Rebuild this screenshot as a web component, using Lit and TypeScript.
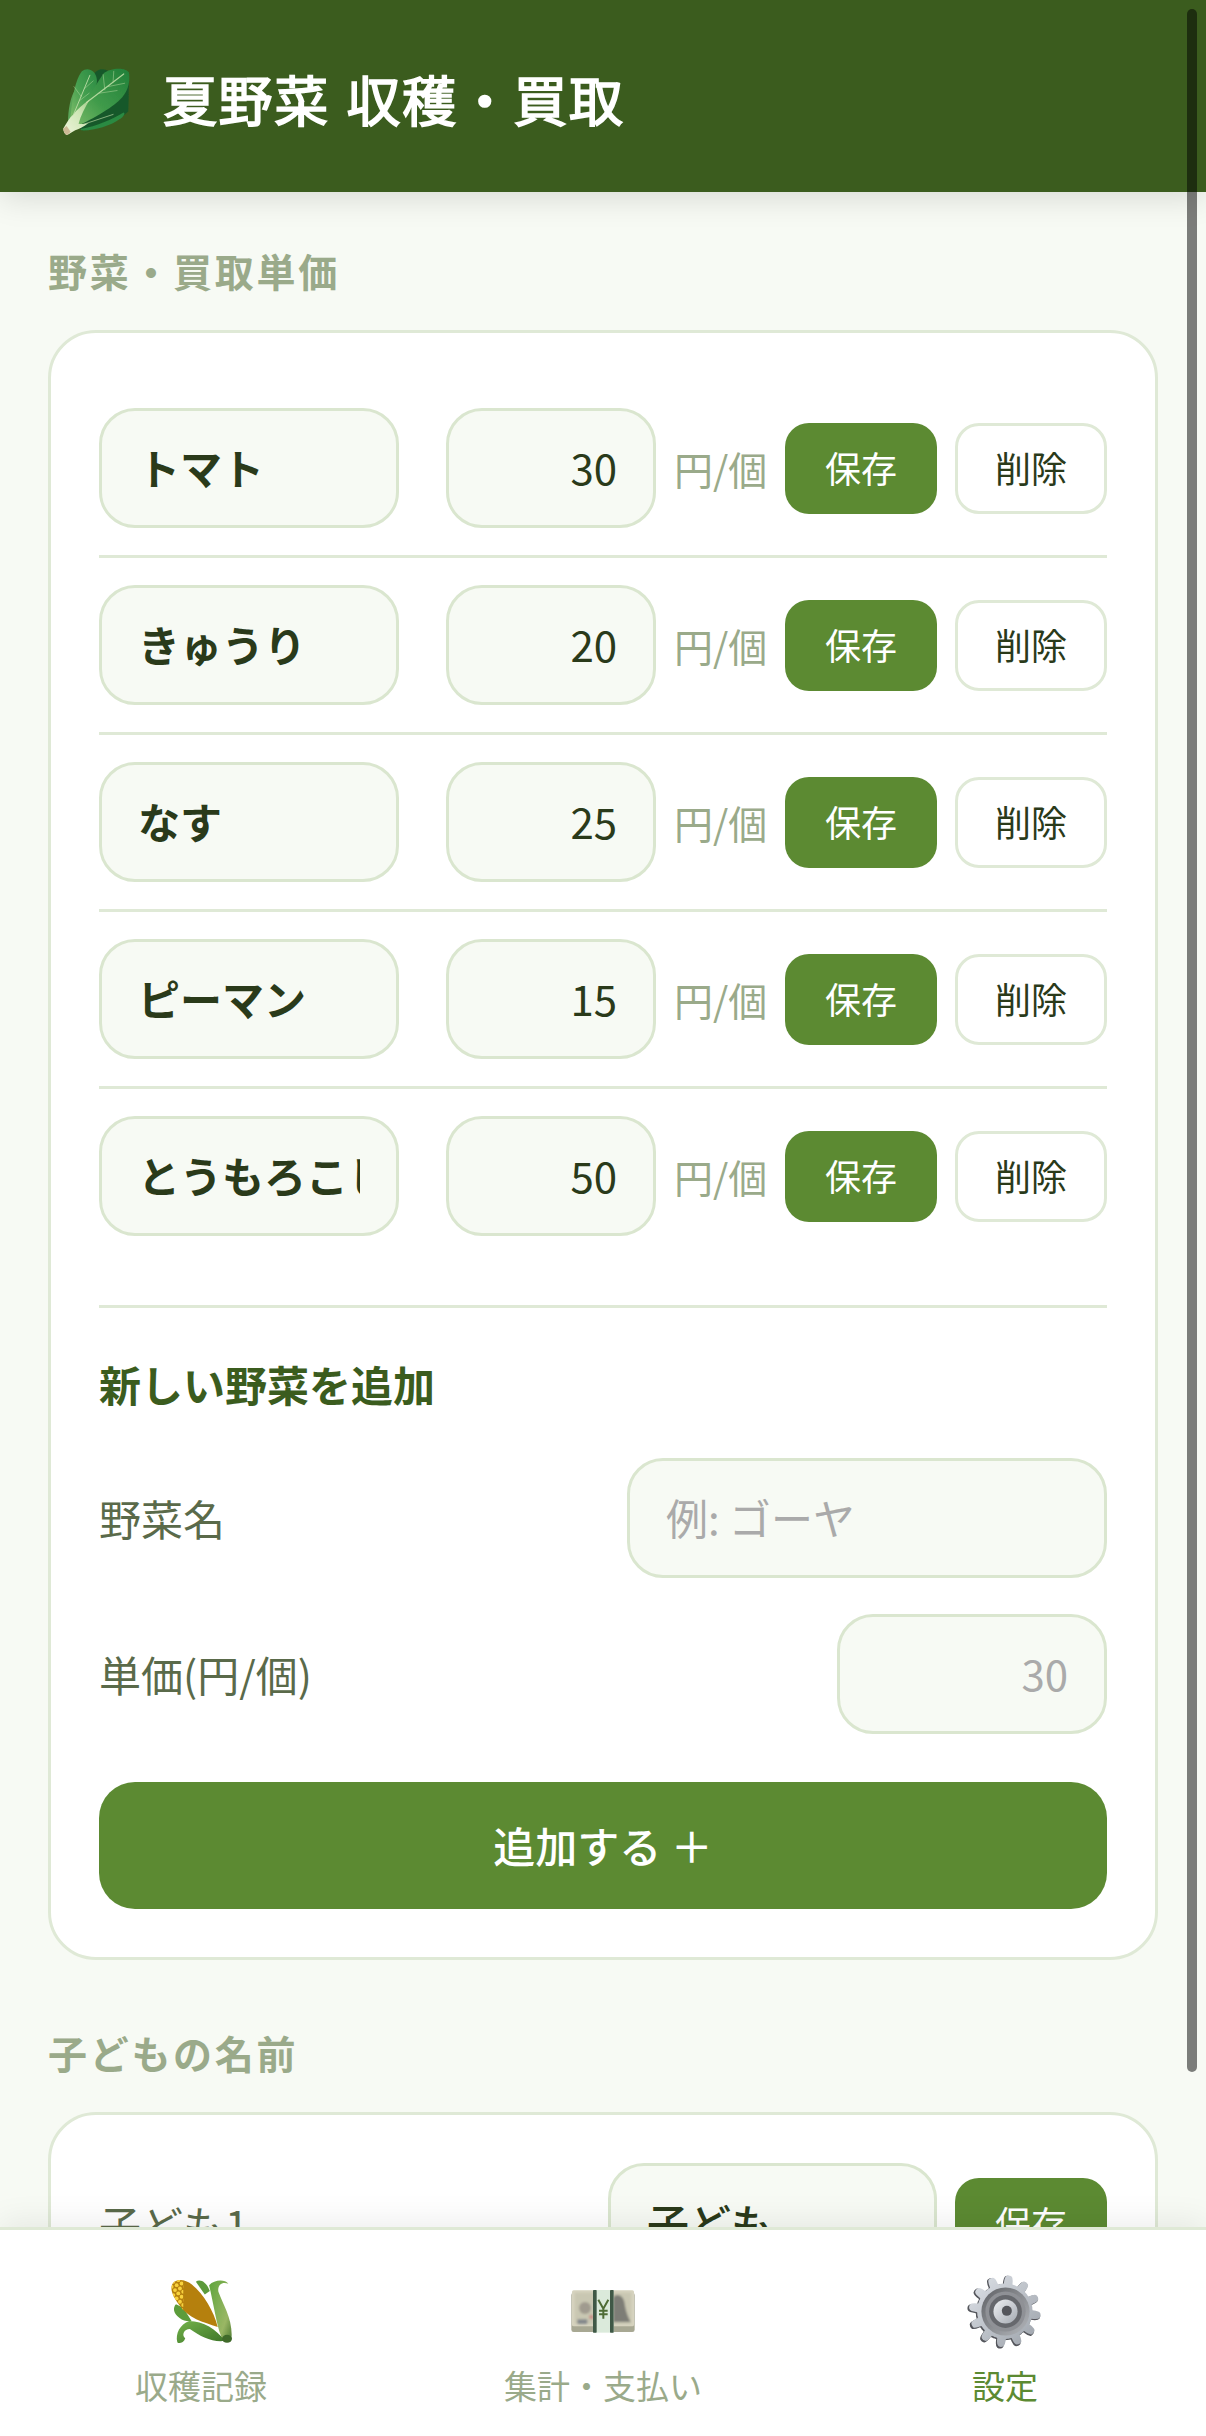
import { LitElement, html, css } from "lit";
import { customElement } from "lit/decorators.js";

const VEG: [string, string][] = [
  ["トマト", "30"],
  ["きゅうり", "20"],
  ["なす", "25"],
  ["ピーマン", "15"],
  ["とうもろこし", "50"],
];

function gearPath(cx: number, cy: number, rO: number, rI: number, n: number): string {
  const pts: string[] = [];
  for (let i = 0; i < n; i++) {
    const a = (i / n) * Math.PI * 2 + 0.12;
    const w = (Math.PI * 2) / n;
    const p = (r: number, t: number) =>
      `${(cx + r * Math.cos(t)).toFixed(1)} ${(cy + r * Math.sin(t)).toFixed(1)}`;
    pts.push(
      `${i === 0 ? "M" : "L"}${p(rI, a - w * 0.3)}`,
      `Q${p(rO * 0.98, a - w * 0.24)} ${p(rO, a - w * 0.12)}`,
      `Q${p(rO + 3, a)} ${p(rO, a + w * 0.12)}`,
      `Q${p(rO * 0.98, a + w * 0.24)} ${p(rI, a + w * 0.3)}`,
      `Q${p(rI - 1, a + w * 0.4)} ${p(rI, a + w * 0.5)}`,
      `Q${p(rI - 1, a + w * 0.6)} ${p(rI, a + w * 0.7)}`
    );
  }
  return pts.join(" ") + "Z";
}

const leafIcon = html`<svg class="leaf" viewBox="60 50 220 220" aria-hidden="true">
  <defs>
    <filter id="sl"><feGaussianBlur stdDeviation="1.5" /></filter>
    <linearGradient id="lf1" x1="0" y1="1" x2="1" y2="0">
      <stop offset="0" stop-color="#86c06c" /><stop offset=".5" stop-color="#46a050" /><stop offset="1" stop-color="#2a8a42" />
    </linearGradient>
    <linearGradient id="lf2" x1="0" y1="1" x2="1" y2="0">
      <stop offset="0" stop-color="#7dbc68" /><stop offset=".45" stop-color="#3f9a4a" /><stop offset="1" stop-color="#218039" />
    </linearGradient>
    <linearGradient id="lf3" x1="0" y1="1" x2="1" y2="0">
      <stop offset="0" stop-color="#f0f5dc" /><stop offset=".6" stop-color="#cfe6b6" /><stop offset="1" stop-color="#9dcb86" />
    </linearGradient>
  </defs>
  <g filter="url(#sl)">
    <path d="M84 225C84 180 92 140 108 118C100 160 100 195 104 225Z" fill="#5aa558" />
    <path d="M110 226L160 78C170 58 190 56 204 64L268 96L266 186C240 215 170 242 126 244Z" fill="#17592a" />
    <path d="M90 222C96 170 100 100 126 66C142 52 168 62 171 90C174 120 150 155 112 222Z" fill="url(#lf1)" />
    <path d="M98 232C130 180 160 115 192 72C210 56 258 52 268 70C272 105 262 130 240 152C220 175 150 215 98 238Z" fill="url(#lf2)" />
    <path d="M122 240C170 232 222 208 252 190C258 192 250 205 240 210C210 232 160 246 124 244Z" fill="#2a8a42" />
    <path d="M70 238C80 222 88 206 100 196C112 180 130 165 150 150C135 175 122 200 116 224C126 226 135 225 146 222C130 234 116 240 106 244C96 250 84 258 80 258C74 255 70 246 70 238Z" fill="url(#lf3)" />
    <path d="M70 238L80 231L92 248L82 258C74 256 70 246 70 238Z" fill="#cdb995" />
    <g fill="none" stroke="#c6e2ac" stroke-linecap="round" opacity=".85">
      <path d="M100 198L150 78" stroke-width="3" /><path d="M124 142L102 112M134 118L160 95M118 155L148 132" stroke-width="1.5" />
      <path d="M140 160L252 74" stroke-width="3.5" /><path d="M195 122L190 76M220 98L222 66M178 132L232 124M205 112L255 102" stroke-width="1.6" />
      <path d="M130 226L220 196" stroke-width="2.2" />
    </g>
  </g>
</svg>`;

const kernels: { x: number; y: number; c: string }[] = [];
for (let i = 0; i < 16; i++) {
  for (let j = -6; j < 7; j++) {
    const odd = Math.abs(j) % 2 === 1;
    const x = 160 + i * 10 + j * 10 + (odd ? 5 : 0);
    const y = 62 + i * 10 - j * 10 + (odd ? 5 : 0);
    const t = i / 15;
    kernels.push({ x, y, c: t < 0.5 ? "#f8d23e" : t < 0.8 ? "#efbd2a" : "#dca21a" });
  }
}

const cornIcon = html`<svg class="corn" viewBox="150 45 190 210" aria-hidden="true">
  <defs>
    <filter id="sc"><feGaussianBlur stdDeviation="1.2" /></filter>
    <linearGradient id="hk" x1="0" y1="0" x2="1" y2="1">
      <stop offset="0" stop-color="#5fa53c" /><stop offset=".7" stop-color="#9ab765" /><stop offset="1" stop-color="#4d7a30" />
    </linearGradient>
    <linearGradient id="hb" x1="0" y1="0" x2="1" y2="1">
      <stop offset="0" stop-color="#74b34a" /><stop offset="1" stop-color="#3c7429" />
    </linearGradient>
    <clipPath id="cc"><path d="M155 75C160 52 192 50 216 70C252 100 282 150 294 198C250 184 204 172 178 132C162 110 152 92 155 75Z" /></clipPath>
  </defs>
  <g filter="url(#sc)">
    <path d="M228 62C240 52 260 62 270 90L255 100Z" fill="#5c9a3a" />
    <path d="M168 130C158 140 160 158 178 170C190 180 205 182 215 180L190 140Z" fill="#5b9c3a" />
    <path d="M155 75C160 52 192 50 216 70C252 100 282 150 294 198C250 184 204 172 178 132C162 110 152 92 155 75Z" fill="#b5800f" />
    <g clip-path="url(#cc)">
      ${kernels.map((k) => html`<svg><circle cx=${k.x} cy=${k.y} r="5.8" fill=${k.c} /></svg>`)}
    </g>
    <path d="M268 72C284 55 316 54 326 68C308 60 292 72 296 92C310 130 336 170 336 222C336 244 318 250 304 226C290 190 282 130 268 72Z" fill="url(#hk)" />
    <path d="M172 244C166 218 180 190 208 180C250 180 290 205 316 240C280 246 240 226 210 204C192 204 184 222 196 232C192 246 176 250 172 244Z" fill="url(#hb)" />
    <ellipse cx="322" cy="234" rx="15" ry="12" fill="#3f6a2c" />
  </g>
</svg>`;

const moneyIcon = html`<svg class="money" viewBox="118 78 198 138" aria-hidden="true">
  <defs><filter id="sm"><feGaussianBlur stdDeviation="2.4" /></filter></defs>
  <rect x="122" y="92" width="190" height="118" rx="7" fill="#a8a893" />
  <rect x="124" y="85" width="186" height="108" rx="5" fill="#d6d3bf" />
  <g filter="url(#sm)">
    <rect x="132" y="92" width="170" height="94" fill="#c9c7b2" />
    <circle cx="163" cy="138" r="18" fill="#a09b8f" />
    <circle cx="182" cy="165" r="7" fill="#c98f88" />
    <rect x="140" y="172" width="30" height="14" rx="3" fill="#85898c" />
    <path d="M248 180V105C258 92 280 100 282 125C286 150 292 165 300 180Z" fill="#7d7d76" />
  </g>
  <rect x="187" y="84" width="62" height="128" fill="#dbeadb" />
  <rect x="187" y="84" width="11" height="128" rx="2" fill="#3f5846" />
  <rect x="238" y="84" width="11" height="128" rx="2" fill="#3f5846" />
  <g fill="none" stroke="#4f6c35" stroke-width="6">
    <path d="M203 113L218 140L233 113M218 140V170M205 146H231M205 157H231" />
  </g>
</svg>`;

const gearIcon = html`<svg class="gear" viewBox="80 35 230 230" aria-hidden="true">
  <defs>
    <filter id="sg"><feGaussianBlur stdDeviation="1.2" /></filter>
    <linearGradient id="gg" x1="0" y1="0" x2="1" y2="1">
      <stop offset="0" stop-color="#dfe3e9" /><stop offset="1" stop-color="#9aa0a8" />
    </linearGradient>
    <linearGradient id="gr" x1="0" y1="0" x2="1" y2="1">
      <stop offset="0" stop-color="#5f6165" /><stop offset="1" stop-color="#b4b7bc" />
    </linearGradient>
    <linearGradient id="gh" x1="0" y1="0" x2="1" y2="1">
      <stop offset="0" stop-color="#eef0f3" /><stop offset="1" stop-color="#a5aab2" />
    </linearGradient>
  </defs>
  <g filter="url(#sg)">
    <path d=${gearPath(190, 152, 108, 84, 12)} fill="#54565c" />
    <path d=${gearPath(193, 149, 106, 83, 12)} fill="url(#gg)" />
    <circle cx="195" cy="150" r="72" fill="url(#gr)" />
    <circle cx="195" cy="150" r="60" fill="#8f9196" />
    <circle cx="195" cy="150" r="49" fill="#66686d" />
    <circle cx="195" cy="150" r="36" fill="url(#gh)" />
    <circle cx="199" cy="148" r="15" fill="#55575c" />
  </g>
</svg>`;

@customElement("app-root")
export class AppRoot extends LitElement {
  static styles = css`
    :host {
      display: block;
      width: 1206px;
      height: 2436px;
      font-family: "Noto Sans CJK JP", "Noto Sans", sans-serif;
      color: #2a3a1a;
    }
    * { box-sizing: border-box; }
    .app {
      position: relative;
      display: flex;
      flex-direction: column;
      height: 2436px;
      overflow: hidden;
      background: #f7faf4;
    }
    header {
      position: relative;
      z-index: 2;
      flex: none;
      height: 192px;
      padding: 12px 60px 0;
      display: flex;
      align-items: center;
      gap: 30px;
      background: #3b5c1e;
      box-shadow: 0 6px 30px rgba(0, 0, 0, 0.13);
    }
    .leaf { width: 73px; height: 73px; flex: none; display: block; }
    h1 {
      margin: 0;
      font-size: 54px;
      line-height: 1.2;
      font-weight: 400;
      color: #fff;
      letter-spacing: 1.6px;
      word-spacing: 3px;
      -webkit-text-stroke: 1.7px #fff;
      white-space: pre;
      position: relative;
      top: -3px;
    }
    main {
      flex: 1;
      min-height: 0;
      overflow: hidden;
      padding: 49px 48px 0;
    }
    h2 {
      margin: 0 0 31px;
      font-size: 39px;
      line-height: 58px;
      font-weight: 700;
      color: #9aaa8a;
      letter-spacing: 2.7px;
    }
    .card {
      background: #fff;
      border: 3px solid #dfe9d6;
      border-radius: 48px;
      padding: 48px;
    }
    section + section { margin-top: 63px; }
    input {
      display: block;
      height: 120px;
      padding: 0 36px 4px;
      border: 3px solid #dae6cf;
      border-radius: 36px;
      background: #f7faf4;
      font: 400 42px "Noto Sans CJK JP", "Noto Sans", sans-serif;
      color: #2a3a1a;
      outline: none;
    }
    input::placeholder { color: #aaaaaa; opacity: 1; }
    input.name { width: 300px; font-weight: 700; margin-right: 29px; flex: none; }
    input.num { text-align: right; }
    input.price { width: 210px; flex: none; }
    .row {
      display: flex;
      align-items: center;
      gap: 18px;
      padding: 27px 0;
      border-bottom: 3px solid #dfe9d6;
    }
    .row.last { border-bottom: none; }
    .unit {
      flex: none;
      font-size: 39px;
      line-height: 1.4;
      color: #9aaa8a;
      white-space: nowrap;
      width: 93px;
    }
    button {
      flex: none;
      height: 91px;
      width: 152px;
      padding: 0 0 2px;
      border-radius: 24px;
      font: 400 36px "Noto Sans CJK JP", "Noto Sans", sans-serif;
      border: none;
      background: #5c8a32;
      color: #fff;
    }
    button.del {
      background: #fff;
      border: 3px solid #dfe9d6;
      color: #2a3a1a;
    }
    .add-area {
      margin-top: 42px;
      border-top: 3px solid #dfe9d6;
      padding-top: 44px;
      display: flex;
      flex-direction: column;
    }
    h3 {
      margin: 0 0 43px;
      font-size: 42px;
      line-height: 63px;
      font-weight: 700;
      color: #3b5c1e;
    }
    .field {
      display: flex;
      justify-content: space-between;
      align-items: center;
    }
    .field + .field { margin-top: 36px; }
    .field label {
      font-size: 42px;
      line-height: 1.4;
      color: #5a6a4a;
    }
    .w480 { width: 480px; }
    .w270 { width: 270px; }
    button.add {
      display: block;
      width: 100%;
      height: 127px;
      margin-top: 48px;
      border-radius: 36px;
      font-size: 42px;
      font-weight: 500;
    }
    .child {
      display: flex;
      align-items: center;
      gap: 18px;
    }
    .child label { flex: 1; font-size: 42px; color: #5a6a4a; }
    .child input { width: 329px; flex: none; font-weight: 500; }
    nav {
      position: relative;
      z-index: 2;
      flex: none;
      height: 209px;
      background: #fff;
      border-top: 3px solid #dfe9d6;
      box-shadow: 0 -6px 30px rgba(0, 0, 0, 0.07);
      display: grid;
      grid-template-columns: repeat(3, 402px);
    }
    .tab {
      display: flex;
      flex-direction: column;
      align-items: center;
      font-size: 33px;
      color: #9aaa8a;
      line-height: 48px;
    }
    .tab.on { color: #5c8a32; }
    .ico {
      height: 72px;
      margin: 45px 0 14px;
      display: flex;
      align-items: center;
      justify-content: center;
    }
    .ico svg { display: block; }
    .corn { width: 63px; height: 70px; }
    .money { width: 66px; height: 46px; }
    .gear { width: 77px; height: 77px; }
    .scrollbar {
      position: absolute;
      z-index: 3;
      top: 9px;
      right: 9px;
      width: 10px;
      height: 2063px;
      border-radius: 5px;
      background: rgba(0, 0, 0, 0.5);
    }
  `;

  render() {
    return html`<div class="app">
      <header>
        ${leafIcon}
        <h1>夏野菜 収穫・買取</h1>
      </header>
      <main>
        <section>
          <h2>野菜・買取単価</h2>
          <div class="card">
            ${VEG.map(
              ([n, p], i) => html`<div class="row ${i === VEG.length - 1 ? "last" : ""}">
                <input class="name" .value=${n} />
                <input class="num price" .value=${p} />
                <span class="unit">円/個</span>
                <button>保存</button>
                <button class="del">削除</button>
              </div>`
            )}
            <div class="add-area">
              <h3>新しい野菜を追加</h3>
              <div class="field">
                <label>野菜名</label>
                <input class="w480" placeholder="例: ゴーヤ" />
              </div>
              <div class="field">
                <label>単価(円/個)</label>
                <input class="num w270" placeholder="30" />
              </div>
              <button class="add">追加する ＋</button>
            </div>
          </div>
        </section>
        <section>
          <h2>子どもの名前</h2>
          <div class="card">
            <div class="child">
              <label>子ども1</label>
              <input .value=${"子ども"} />
              <button>保存</button>
            </div>
          </div>
        </section>
      </main>
      <nav>
        <div class="tab"><div class="ico">${cornIcon}</div>収穫記録</div>
        <div class="tab"><div class="ico">${moneyIcon}</div>集計・支払い</div>
        <div class="tab on"><div class="ico">${gearIcon}</div>設定</div>
      </nav>
      <div class="scrollbar"></div>
    </div>`;
  }
}
